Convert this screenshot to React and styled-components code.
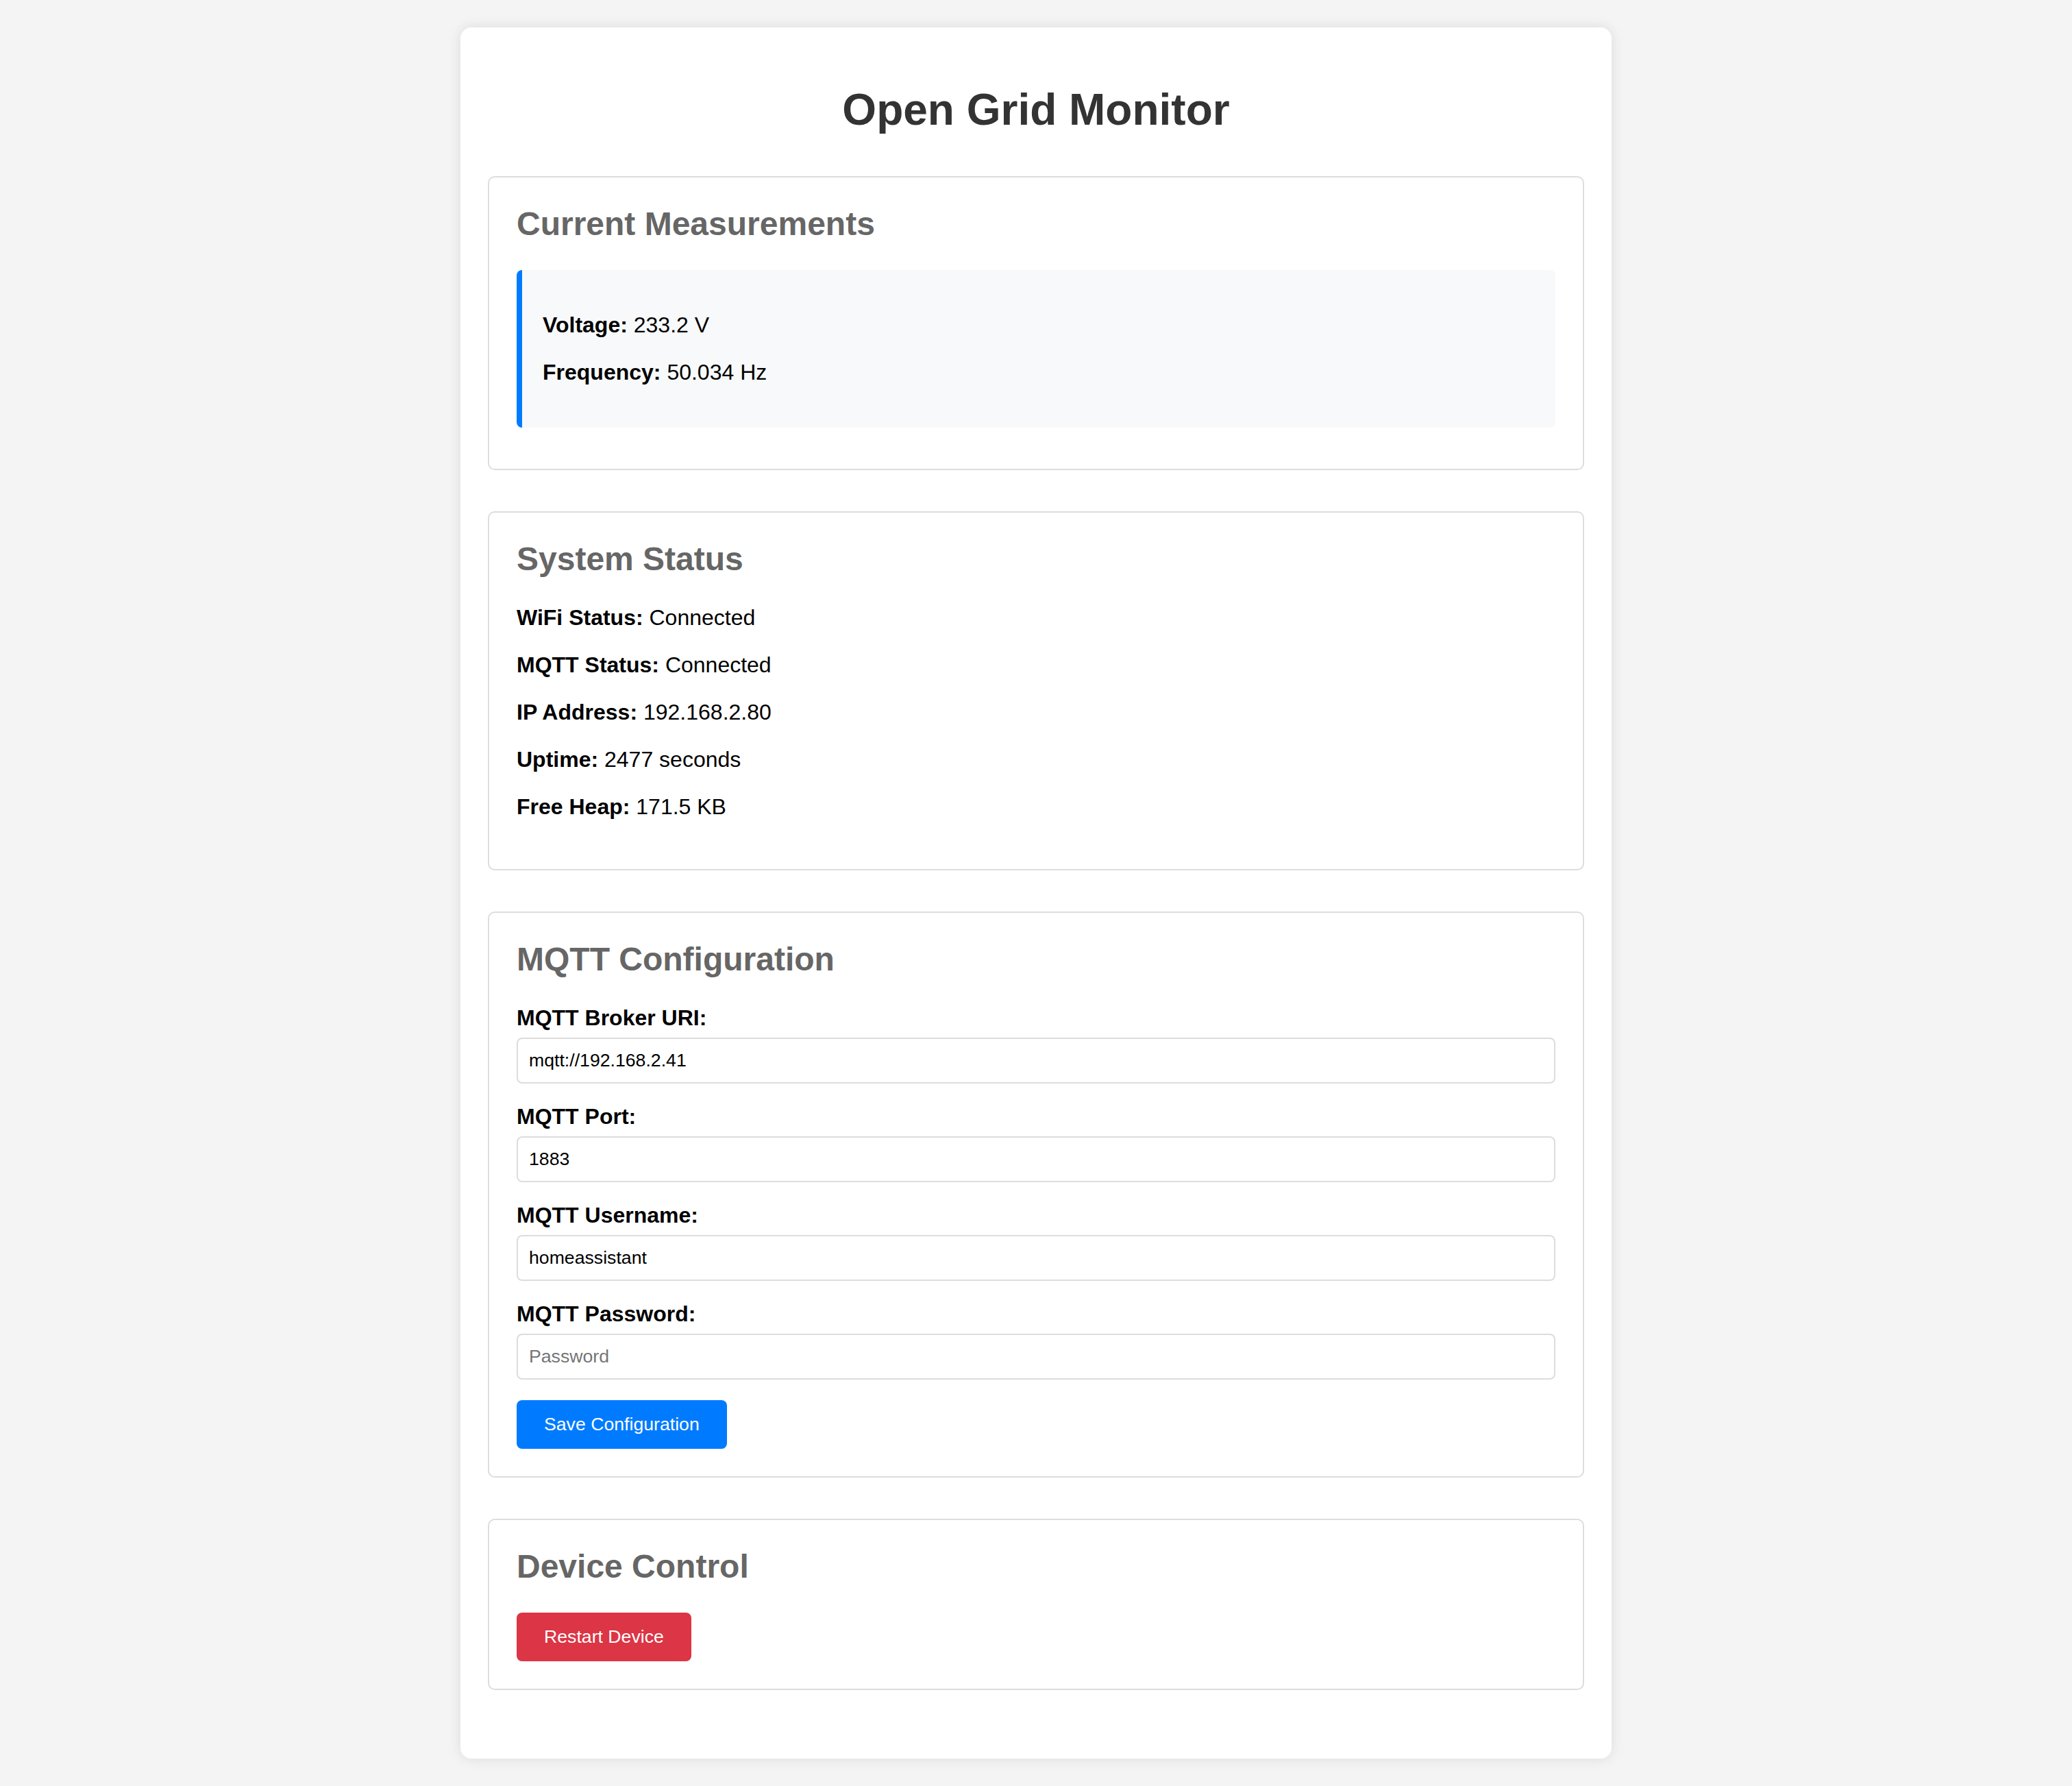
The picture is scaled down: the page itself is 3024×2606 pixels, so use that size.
import styled, { createGlobalStyle } from "styled-components";

const GlobalStyle = createGlobalStyle`
  body {
    margin: 0;
    padding: 40px;
    background-color: #f4f4f4;
    font-family: "Liberation Sans", Arial, Helvetica, sans-serif;
    font-size: 32px;
  }
`

const Container = styled.div`
  max-width: 1600px;
  margin: 0 auto;
  background: white;
  padding: 40px;
  border-radius: 16px;
  box-shadow: 0 0 20px rgba(0, 0, 0, 0.1);
`

const Title = styled.h1`
  color: #333;
  text-align: center;
  font-size: 64px;
  margin: 43px 0 60px;
`

const Section = styled.section`
  margin-bottom: 60px;
  padding: 40px;
  border: 2px solid #ddd;
  border-radius: 10px;
`

const SectionTitle = styled.h2`
  color: #666;
  font-size: 48px;
  margin: 0 0 40px;
`

const Line = styled.p`
  margin: 32px 0;
`

const Measurement = styled.div`
  background: #f8f9fa;
  padding: 30px;
  border-left: 8px solid #007bff;
  border-radius: 8px;
  margin: 20px 0;
`

const FormGroup = styled.div`
  margin-bottom: 30px;
`

const Label = styled.label`
  display: block;
  margin-bottom: 10px;
  font-weight: bold;
`

const Input = styled.input`
  display: block;
  width: 100%;
  box-sizing: border-box;
  padding: 16px;
  border: 2px solid #ddd;
  border-radius: 8px;
  font-family: "Liberation Sans", Arial, Helvetica, sans-serif;
  font-size: 26.67px;
  color: #000;
  background: #fff;

  &::placeholder {
    color: #757575;
  }
`

const Button = styled.button`
  background-color: ${p => (p.$danger ? "#dc3545" : "#007bff")};
  color: white;
  padding: 20px 40px;
  border: none;
  border-radius: 8px;
  cursor: pointer;
  font-family: "Liberation Sans", Arial, Helvetica, sans-serif;
  font-size: 26.67px;
`

const Info = ({ label, value }) => (
  <Line>
    <strong>{label}:</strong> {value}
  </Line>
)

const Field = ({ id, label, value, placeholder, type = "text" }) => (
  <FormGroup>
    <Label htmlFor={id}>{label}:</Label>
    <Input id={id} type={type} defaultValue={value} placeholder={placeholder} />
  </FormGroup>
)

const status = [
  ["WiFi Status", "Connected"],
  ["MQTT Status", "Connected"],
  ["IP Address", "192.168.2.80"],
  ["Uptime", "2477 seconds"],
  ["Free Heap", "171.5 KB"],
]

export default function App() {
  return (
    <>
      <GlobalStyle />
      <Container>
        <Title>Open Grid Monitor</Title>

        <Section>
          <SectionTitle>Current Measurements</SectionTitle>
          <Measurement>
            <Info label="Voltage" value="233.2 V" />
            <Info label="Frequency" value="50.034 Hz" />
          </Measurement>
        </Section>

        <Section>
          <SectionTitle>System Status</SectionTitle>
          {status.map(([label, value]) => (
            <Info key={label} label={label} value={value} />
          ))}
        </Section>

        <Section>
          <SectionTitle>MQTT Configuration</SectionTitle>
          <form onSubmit={e => e.preventDefault()}>
            <Field id="broker" label="MQTT Broker URI" value="mqtt://192.168.2.41" />
            <Field id="port" label="MQTT Port" value="1883" type="number" />
            <Field id="username" label="MQTT Username" value="homeassistant" />
            <Field id="password" label="MQTT Password" placeholder="Password" type="password" />
            <Button type="submit">Save Configuration</Button>
          </form>
        </Section>

        <Section>
          <SectionTitle>Device Control</SectionTitle>
          <Button type="button" $danger>Restart Device</Button>
        </Section>
      </Container>
    </>
  )
}
